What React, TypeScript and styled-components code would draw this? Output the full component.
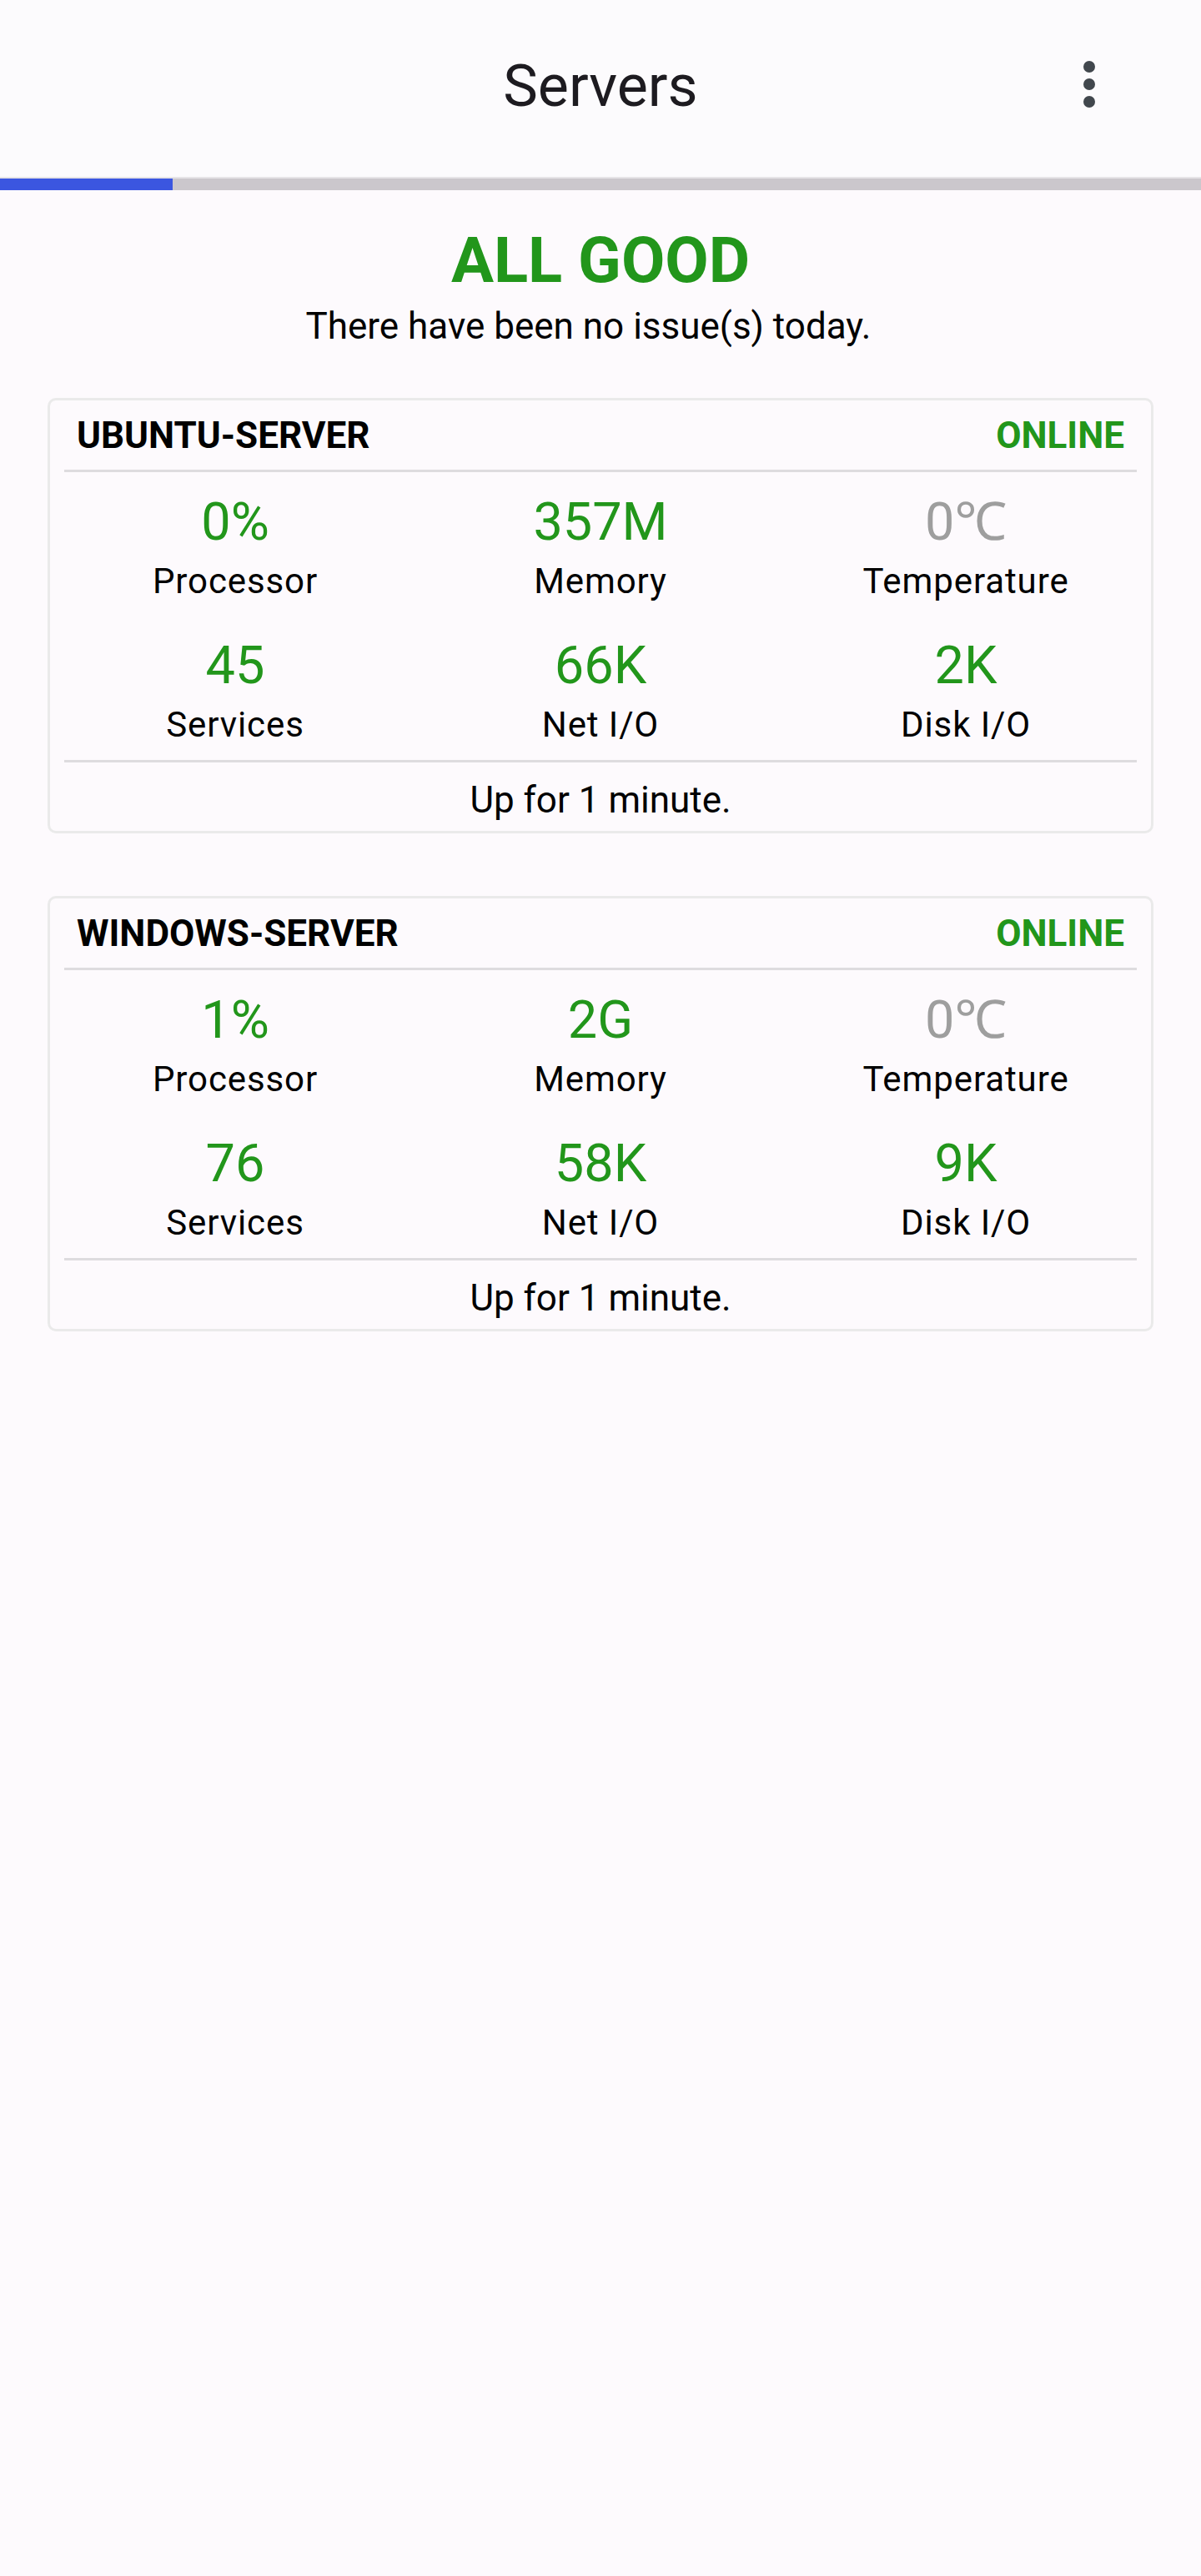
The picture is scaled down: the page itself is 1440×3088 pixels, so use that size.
import React from "react";
import styled, { createGlobalStyle } from "styled-components";

const GlobalStyle = createGlobalStyle`
  html, body {
    margin: 0;
    padding: 0;
    background: #fdfafd;
  }
  body {
    font-family: Roboto, "Noto Sans", "Liberation Sans", sans-serif;
    color: #000;
  }
  * { box-sizing: border-box; }
`;

const GREEN = "#22961b";

const Page = styled.div`
  width: 1440px;
  min-height: 3088px;
  background: #fdfafd;
`;

const AppBar = styled.header`
  height: 214px;
  background: #fcfbfd;
  border-bottom: 2px solid #e6e4e7;
  display: grid;
  grid-template-columns: 1fr auto 1fr;
  align-items: center;
  padding-bottom: 6px;
`;

const Title = styled.h1`
  grid-column: 2;
  margin: 0;
  font-size: 70px;
  font-weight: 400;
  line-height: 70px;
  color: #1d1b20;
`;

const MenuButton = styled.button`
  grid-column: 3;
  justify-self: end;
  width: 168px;
  height: 168px;
  margin-right: 50px;
  margin-top: -4px;
  border: none;
  background: transparent;
  padding: 0;
  display: flex;
  align-items: center;
  justify-content: center;
`;

const Progress = styled.div`
  height: 14px;
  background: #cbc7cc;
`;

const ProgressFill = styled.div`
  height: 100%;
  background: #3b56e0;
`;

const Summary = styled.section`
  padding-top: 46px;
  text-align: center;
`;

const Status = styled.div`
  font-size: 76px;
  line-height: 77px;
  font-weight: 700;
  color: ${GREEN};
`;

const Subtitle = styled.div`
  margin-top: 14px;
  padding-right: 29px;
  font-size: 44px;
  line-height: 53px;
  color: #000;
`;

const CardList = styled.div`
  margin-top: 59px;
  padding: 0 57px;
  display: flex;
  flex-direction: column;
  gap: 75px;
`;

const Card = styled.article`
  border: 3px solid #eaeaea;
  border-radius: 10px;
  background: #fdfafd;
`;

const CardHeader = styled.div`
  margin: 0 17px;
  padding: 20.5px 15px;
  border-bottom: 3px solid #dedcdf;
  display: flex;
  justify-content: space-between;
  font-size: 44px;
  line-height: 42px;
  font-weight: 700;
`;

const ServerName = styled.span`
  color: #000;
`;

const ServerState = styled.span`
  color: ${GREEN};
`;

const StatsGrid = styled.div`
  padding: 28px 3px 21px;
  display: grid;
  grid-template-columns: repeat(3, 1fr);
  row-gap: 48px;
`;

const Stat = styled.div`
  display: flex;
  flex-direction: column;
  align-items: center;
  gap: 19px;
`;

const StatValue = styled.div<{ $muted?: boolean }>`
  font-size: 63px;
  line-height: 63px;
  color: ${(p) => (p.$muted ? "#9e9e9e" : GREEN)};
`;

const StatLabel = styled.div`
  font-size: 42px;
  line-height: 42px;
  letter-spacing: 0.9px;
  color: #000;
`;

const CardFooter = styled.div`
  margin: 0 17px;
  padding: 22.7px 0 14px;
  border-top: 3px solid #dedcdf;
  text-align: center;
  font-size: 44px;
  line-height: 45.5px;
  color: #000;
`;

type StatItem = { value: string; label: string; muted?: boolean };
type Server = { name: string; state: string; stats: StatItem[]; uptime: string };

const servers: Server[] = [
  {
    name: "UBUNTU-SERVER",
    state: "ONLINE",
    stats: [
      { value: "0%", label: "Processor" },
      { value: "357M", label: "Memory" },
      { value: "0\u2103", label: "Temperature", muted: true },
      { value: "45", label: "Services" },
      { value: "66K", label: "Net I/O" },
      { value: "2K", label: "Disk I/O" },
    ],
    uptime: "Up for 1 minute.",
  },
  {
    name: "WINDOWS-SERVER",
    state: "ONLINE",
    stats: [
      { value: "1%", label: "Processor" },
      { value: "2G", label: "Memory" },
      { value: "0\u2103", label: "Temperature", muted: true },
      { value: "76", label: "Services" },
      { value: "58K", label: "Net I/O" },
      { value: "9K", label: "Disk I/O" },
    ],
    uptime: "Up for 1 minute.",
  },
];

const MoreIcon = () => (
  <svg width="84" height="84" viewBox="0 0 24 24" aria-hidden="true">
    <circle cx="12" cy="6" r="2" fill="#41474d" />
    <circle cx="12" cy="12" r="2" fill="#41474d" />
    <circle cx="12" cy="18" r="2" fill="#41474d" />
  </svg>
);

export default function App() {
  return (
    <Page>
      <GlobalStyle />
      <AppBar>
        <Title>Servers</Title>
        <MenuButton aria-label="More options">
          <MoreIcon />
        </MenuButton>
      </AppBar>
      <Progress>
        <ProgressFill style={{ width: "207px" }} />
      </Progress>
      <Summary>
        <Status>ALL GOOD</Status>
        <Subtitle>There have been no issue(s) today.</Subtitle>
      </Summary>
      <CardList>
        {servers.map((s) => (
          <Card key={s.name}>
            <CardHeader>
              <ServerName>{s.name}</ServerName>
              <ServerState>{s.state}</ServerState>
            </CardHeader>
            <StatsGrid>
              {s.stats.map((st) => (
                <Stat key={st.label}>
                  <StatValue $muted={st.muted}>{st.value}</StatValue>
                  <StatLabel>{st.label}</StatLabel>
                </Stat>
              ))}
            </StatsGrid>
            <CardFooter>{s.uptime}</CardFooter>
          </Card>
        ))}
      </CardList>
    </Page>
  );
}
